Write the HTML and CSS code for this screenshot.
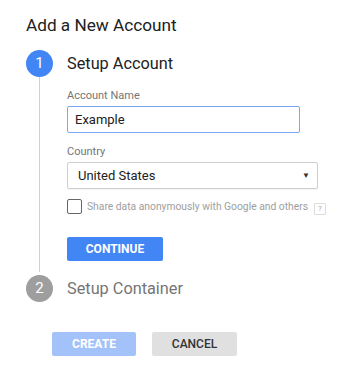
FILE: index.html
```html
<!DOCTYPE html>
<html>
<head>
<meta charset="utf-8">
<link rel="stylesheet" href="styles.css">
</head>
<body>
<div class="page">
  <h1 class="title">Add a New Account</h1>
  <div class="step step-active">
    <div class="rail">
      <div class="num num-blue">1</div>
      <div class="line"></div>
    </div>
    <div class="step-body">
      <div class="step-title">Setup Account</div>
      <div class="field-label">Account Name</div>
      <div class="input">Example</div>
      <div class="field-label label-country">Country</div>
      <div class="select"><span>United States</span><span class="arrow">&#9660;</span></div>
      <div class="check-row">
        <span class="checkbox"></span>
        <span class="check-text">Share data anonymously with Google and others</span>
        <span class="help">?</span>
      </div>
      <div class="btn btn-continue">CONTINUE</div>
    </div>
  </div>
  <div class="step">
    <div class="rail">
      <div class="num num-gray">2</div>
    </div>
    <div class="step-body">
      <div class="step-title step-title-gray">Setup Container</div>
    </div>
  </div>
  <div class="footer">
    <div class="btn btn-create">CREATE</div>
    <div class="btn btn-cancel">CANCEL</div>
  </div>
</div>
</body>
</html>
```
FILE: styles.css
```css
* { box-sizing: border-box; }
body { margin: 0; background: #fff; font-family: Roboto, "Noto Sans", sans-serif; color: #222; }
.page { padding: 12px 0 0 26px; }
.title { margin: 0; font-size: 17.2px; font-weight: 400; line-height: 26px; color: #212121; }
.step { display: flex; }
.step-active { margin-top: 12px; }
.rail { width: 27px; display: flex; flex-direction: column; align-items: center; }
.num { width: 27px; height: 27px; border-radius: 50%; color: #fff; font-size: 15px; line-height: 27px; text-align: center; flex: none; }
.num-blue { background: #4285f4; }
.num-gray { background: #9e9e9e; }
.line { flex: 1; width: 1px; background: #d0d0d0; margin-bottom: 3px; }
.step-body { margin-left: 14px; display: flex; flex-direction: column; align-items: flex-start; }
.step-active .step-body { padding-bottom: 14px; }
.step-title { font-size: 16.3px; line-height: 27px; color: #212121; }
.step-title-gray { color: #757575; }
.field-label { font-size: 11px; line-height: 13px; color: #757575; margin-top: 12px; margin-bottom: 4px; }
.label-country { margin-top: 12px; }
.input { width: 233px; height: 27px; border: 1px solid #7aa7f5; border-radius: 2px; font-size: 13px; line-height: 25px; padding-left: 7px; color: #212121; }
.select { width: 251px; height: 27px; border: 1px solid #cfcfcf; border-radius: 2px; font-size: 13px; line-height: 25px; padding: 0 7px 0 10px; color: #212121; display: flex; justify-content: space-between; box-shadow: 0 1px 1px rgba(0,0,0,0.05); }
.arrow { font-size: 8px; color: #333; }
.check-row { display: flex; align-items: center; margin-top: 10px; height: 15px; }
.checkbox { width: 15px; height: 15px; border: 1.5px solid #666; border-radius: 2px; flex: none; }
.check-text { font-size: 10.3px; color: #9e9e9e; margin-left: 5px; white-space: nowrap; }
.help { width: 12px; height: 12px; border: 1px solid #ddd; border-radius: 1px; font-size: 8px; line-height: 10px; text-align: center; color: #aaa; margin-left: 6px; margin-top: 4px; }
.btn { height: 24px; border-radius: 2px; font-size: 12px; font-weight: 700; line-height: 24px; text-align: center; }
.btn-continue { width: 96px; margin-top: 23px; background: #4285f4; color: #fff; }
.footer { display: flex; gap: 16px; margin-top: 30px; margin-left: 26px; }
.btn-create { width: 84px; background: #a3c2fa; color: #fff; }
.btn-cancel { width: 85px; background: #e0e0e0; color: #333; font-weight: 500; }
```
